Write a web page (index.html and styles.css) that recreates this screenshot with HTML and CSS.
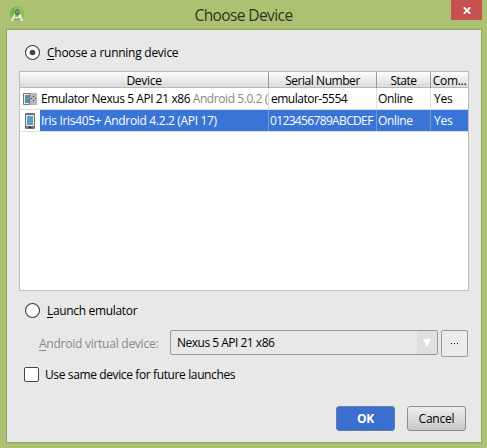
FILE: index.html
```html
<!DOCTYPE html>
<html lang="en">
<head>
<meta charset="utf-8">
<title>Choose Device</title>
<link rel="stylesheet" href="styles.css">
</head>
<body>
<div class="window">
  <header class="titlebar">
    <svg class="app-icon" width="16" height="16" viewBox="0 0 16 16">
      <circle cx="8" cy="7.3" r="7" fill="#73b94a"/>
      <path d="M8 .3a7 7 0 0 1 7 7l-3 3L5 3z" fill="#88c455"/>
      <path d="M6.5 7L2.8 14.8M9.8 7l3.4 7.8M4 11.3q5 1.5 8.5-2" fill="none" stroke="#f0f4ea" stroke-width="1.7"/>
      <path d="M5.5 8L7 3.2h2.500L11 8 8.2 9.5z" fill="#66705f"/>
      <circle cx="8.2" cy="5.8" r="0.9" fill="#b3bbab"/>
    </svg>
    <h1 class="title">Choose Device</h1>
    <button class="close" aria-label="Close">
      <svg width="8" height="7" viewBox="0 0 8 7"><path d="M0.8 0.3L7.2 6.7M7.2 0.3L0.8 6.7" stroke="#fff" stroke-width="1.8"/></svg>
    </button>
  </header>
  <main class="content">
    <div class="option option-running">
      <svg width="17" height="17" viewBox="0 0 17 17"><circle cx="8.5" cy="8.5" r="7" fill="#fff" stroke="#3c3c3c" stroke-width="1.1"/><circle cx="8.5" cy="8.5" r="2.8" fill="#444"/></svg>
      <span class="t-running"><u>C</u>hoose a running device</span>
    </div>
    <div class="table">
      <div class="row head">
        <div class="cell c-device"><span class="t-device">Device</span></div>
        <div class="cell"><span class="t-serial">Serial Number</span></div>
        <div class="cell"><span class="t-state">State</span></div>
        <div class="cell"><span class="t-com">Com...</span></div>
      </div>
      <div class="row">
        <div class="icon">
          <svg width="14" height="12" viewBox="0 0 14 12"><path d="M0 0h14v12H0z" fill="#b5b5b5"/><path d="M.5.5h6v11h-6z" fill="#e9e9e9" stroke="#777"/><path d="M2 2h4v8H2z" fill="#5795b8"/><path d="M10 3h1v1h-1zM8 5h1v1H8zM12 5h1v1h-1zM10 7h1v1h-1z" fill="#444"/></svg>
        </div>
        <div class="cell name"><span class="t-emu">Emulator Nexus 5 API 21 x86 <i>Android 5.0.2 (</i></span></div>
        <div class="cell"><span class="t-emuserial">emulator-5554</span></div>
        <div class="cell"><span class="t-online">Online</span></div>
        <div class="cell yes"><span class="t-yes">Yes</span></div>
      </div>
      <div class="row selected">
        <div class="icon">
          <svg width="10" height="16" viewBox="0 0 10 16"><rect width="10" height="16" rx="1.3" fill="#6f7376"/><path d="M1 2h8v11H1z" fill="#e5e8e9"/><path d="M2 3h6v9H2z" fill="#5b9fc4"/><path d="M4 14h2v1H4z" fill="#111"/></svg>
        </div>
        <div class="cell name"><span class="t-iris">Iris Iris405+ Android 4.2.2 (API 17)</span></div>
        <div class="cell"><span class="t-num">0123456789ABCDEF</span></div>
        <div class="cell"><span class="t-online">Online</span></div>
        <div class="cell yes"><span class="t-yes">Yes</span></div>
      </div>
    </div>
    <div class="option option-launch">
      <svg width="17" height="17" viewBox="0 0 17 17"><circle cx="8.5" cy="8.5" r="7" fill="#fff" stroke="#3c3c3c" stroke-width="1.1"/></svg>
      <span class="t-launch"><u>L</u>aunch emulator</span>
    </div>
    <div class="avd">
      <label class="avd-label"><span class="t-avd"><u>A</u>ndroid virtual device:</span></label>
      <div class="combo">
        <span class="t-nexus">Nexus 5 API 21 x86</span>
        <div class="arrow"><svg width="8" height="8" viewBox="0 0 8 8"><path d="M0 0h8L4 8z" fill="#fff"/></svg></div>
      </div>
      <button class="more" aria-label="More"><svg width="8" height="1" viewBox="0 0 8 1"><path d="M0 0h1v1H0zM3 0h1v1H3zM6 0h1v1H6z"/></svg></button>
    </div>
    <div class="same">
      <span class="checkbox"></span>
      <span class="t-same">Use same device for future launches</span>
    </div>
    <div class="buttons">
      <button class="btn ok"><span class="t-ok">OK</span></button>
      <button class="btn"><span class="t-cancel">Cancel</span></button>
    </div>
  </main>
</div>
</body>
</html>
```
FILE: styles.css
```css
* { box-sizing: border-box; }
body { margin: 0; font: 12px/16px "Open Sans", "Noto Sans", sans-serif; color: #000; }
button { padding: 0; border: 0; font: inherit; color: inherit; }
span { white-space: nowrap; }
u { text-decoration: underline; text-underline-offset: 2px; }
.window { width: 487px; height: 448px; background: #adc172; padding: 0 5px 5px 6px; overflow: hidden; }
.titlebar { height: 29px; display: flex; align-items: flex-start; }
.app-icon { margin: 6px 0 0 3px; }
.title { flex: 1; margin: 5px 0 0 14px; text-align: center; font-size: 15.5px; line-height: 20px; font-weight: 400; letter-spacing: -0.6px; color: #2e3522; padding-right: 3px; }
.close { width: 31px; height: 20px; background: #c75050; display: flex; align-items: center; justify-content: center; }
.content { height: 414px; border: 1px solid #92a65f; background: #e8e8e8; padding: 14px 12px 0; display: flex; flex-direction: column; }
.option { display: flex; align-items: center; height: 17px; padding-left: 5px; gap: 6px; }
.table { margin-top: 10px; height: 220px; border: 1px solid #bcbcbc; background: #fff; flex: none; }
.row { display: grid; grid-template-columns: 20px 229px 108px 54px 37px; height: 22px; border-bottom: 1px solid #ddd; }
.head { height: 16px; background: linear-gradient(#fdfdfd, #dadada); border-bottom-color: #b8b8b8; text-align: center; }
.cell { border-right: 1px solid #ddd; padding-left: 1px; line-height: 21px; overflow: hidden; }
.cell:last-child { border-right: 0; }
.head .cell { line-height: 17px; padding: 0; border-color: #999; overflow: visible; }
.c-device { grid-column: span 2; }
.icon { display: flex; align-items: center; justify-content: center; }
.name { padding-left: 1px; }
.cell.yes { padding-left: 3px; }
.selected .cell { background: #3875d7; color: #fff; border-color: #7898ca; }
i { font-style: normal; color: #888; }
.option-launch { margin-top: 11px; }
.avd { display: flex; margin-top: 11px; height: 27px; }
.avd-label { width: 151px; padding: 6px 0 0 20px; color: #888; }
.combo { width: 268px; height: 25px; border: 1px solid #999; border-radius: 2px; display: flex; justify-content: space-between; align-items: center; padding-left: 6px; }
.arrow { width: 20px; height: 23px; background: #dfdfdf; display: flex; align-items: center; justify-content: center; }
.more { margin-left: 3px; width: 27px; height: 27px; border: 1px solid #999; border-radius: 2px; background: #ebebeb; display: flex; align-items: center; justify-content: center; }
.same { display: flex; margin: 9px 0 0 5px; align-items: center; gap: 6px; height: 17px; }
.checkbox { width: 15px; height: 15px; border: 1px solid #444; border-radius: 2px; background: #fff; }
.buttons { display: flex; justify-content: flex-end; gap: 12px; margin: 23px 3px 0 0; }
.btn { width: 59px; height: 25px; border: 1px solid #8c8c8c; border-radius: 3px; background: linear-gradient(#eee, #c8c8c8); }
.ok { background: #3a6fcf; border-color: #6b7f9f; color: #fff; font-weight: 700; }

/* Tighter tracking for the compact dialog text */
.t-running { letter-spacing: -0.26px; }
.t-device { letter-spacing: -0.3px; }
.t-serial { letter-spacing: -0.45px; }
.t-state { letter-spacing: -0.5px; }
.t-com { letter-spacing: -0.3px; }
.t-emu { letter-spacing: -0.43px; }
.t-emuserial { letter-spacing: -0.5px; padding-left: 1px; }
.t-online { letter-spacing: -0.35px; }
.t-yes { letter-spacing: -0.2px; }
.t-iris { letter-spacing: -0.33px; }
.t-num { letter-spacing: -0.65px; }
.t-launch { letter-spacing: -0.33px; }
.t-avd { letter-spacing: -0.25px; }
.t-nexus { letter-spacing: -0.5px; }
.t-same { letter-spacing: -0.38px; }
.t-ok { letter-spacing: -0.3px; }
.t-cancel { letter-spacing: -0.2px; }
```
